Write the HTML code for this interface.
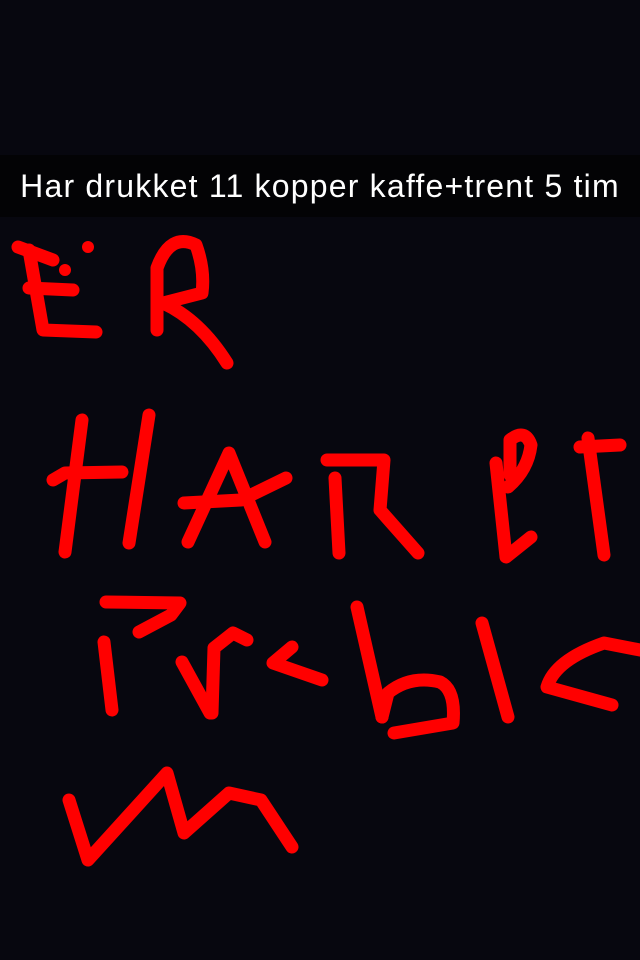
<!DOCTYPE html>
<html><head><meta charset="utf-8"><style>
html,body{margin:0;padding:0;width:640px;height:960px;background:#07070f;overflow:hidden}
.bar{position:absolute;left:0;top:155px;width:640px;height:62px;background:#030305;color:#fff;font-family:"Liberation Sans",sans-serif;font-size:32px;letter-spacing:1.2px;line-height:62px;text-align:center;white-space:nowrap}
svg{position:absolute;left:0;top:0}
</style></head><body>
<div class="bar">Har drukket 11 kopper kaffe+trent 5 tim</div>
<svg width="640" height="960" viewBox="0 0 640 960" fill="none" stroke="#ff0000" stroke-width="13" stroke-linecap="round" stroke-linejoin="round">
<path d="M29 250 L43 330 L96 332"/>
<path d="M29 288 L73 290"/>
<path d="M18 247 L53 260"/>
<circle cx="88" cy="247" r="6" fill="#f00" stroke="none"/>
<circle cx="65" cy="270" r="6" fill="#f00" stroke="none"/>
<path d="M157 330 L157 268 Q170 232 196 245 Q205 270 202 293 L163 303 Q200 320 227 363"/>
<path d="M82 420 L65 552"/>
<path d="M149 415 L129 543"/>
<path d="M53 480 L65 473 L122 472"/>
<path d="M188 542 L229 453 L265 542"/>
<path d="M184 503 L241 500 L286 478"/>
<path d="M335 478 L339 553"/>
<path d="M327 460 L384 460 L380 510 L418 553"/>
<path d="M496 463 L506 557 L531 537"/>
<path d="M510 475 L510 440 Q525 428 531 445 Q528 470 508 487"/>
<path d="M580 447 L620 445"/>
<path d="M588 438 L604 555"/>
<path d="M106 602 L180 603 L171 615 L139 632"/>
<path d="M104 642 L112 710"/>
<path d="M182 662 L210 713"/>
<path d="M212 713 L214 648 L233 633 L247 640"/>
<path d="M292 647 L273 663 L322 680"/>
<path d="M357 607 L382 717"/>
<path d="M382 717 L388 693 Q410 675 440 682 Q456 690 453 723 L394 733"/>
<path d="M482 623 L508 717"/>
<path d="M612 705 L547 687 Q555 660 604 643 L640 650"/>
<path d="M69 800 L88 860 L167 773 L184 833 L229 793 L261 800 L292 847"/>
</svg>
</body></html>
